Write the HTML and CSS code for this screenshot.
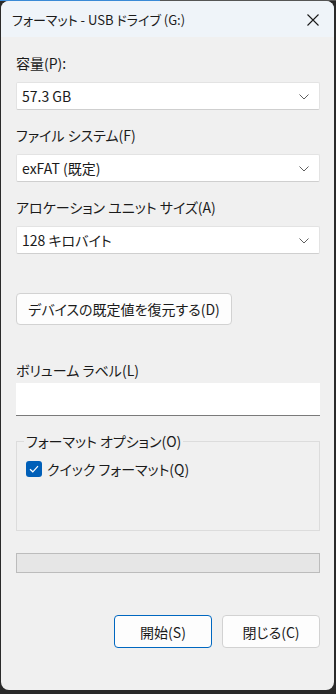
FILE: index.html
```html
<!DOCTYPE html>
<html lang="ja">
<head>
<meta charset="UTF-8">
<meta name="viewport" content="width=device-width, initial-scale=1.0">
<title>フォーマット - USB ドライブ (G:)</title>
<link rel="stylesheet" href="styles.css">
</head>
<body>

<div class="window">
  <div class="titlebar">
    <span class="title">フォーマット - USB ドライブ (G:)</span>
    <svg class="close" width="12" height="12" viewBox="0 0 12 12">
      <path d="M0.5 0.5L11.5 11.5M11.5 0.5L0.5 11.5" stroke="#1a1a1a" stroke-width="1.1" fill="none"/>
    </svg>
  </div>

  <div class="content">
    <div class="label">容量(P):</div>
    <div class="select">
      <span>57.3 GB</span>
      <svg class="chev" width="10" height="6" viewBox="0 0 10 6"><path d="M0.5 0.5L5 5L9.5 0.5" stroke="#5f5f5f" fill="none"/></svg>
    </div>

    <div class="label">ファイル システム(F)</div>
    <div class="select">
      <span>exFAT (既定)</span>
      <svg class="chev" width="10" height="6" viewBox="0 0 10 6"><path d="M0.5 0.5L5 5L9.5 0.5" stroke="#5f5f5f" fill="none"/></svg>
    </div>

    <div class="label">アロケーション ユニット サイズ(A)</div>
    <div class="select">
      <span>128 キロバイト</span>
      <svg class="chev" width="10" height="6" viewBox="0 0 10 6"><path d="M0.5 0.5L5 5L9.5 0.5" stroke="#5f5f5f" fill="none"/></svg>
    </div>

    <button class="btn restore">デバイスの既定値を復元する(D)</button>

    <div class="label label-tight">ボリューム ラベル(L)</div>
    <div class="textbox"></div>

    <fieldset class="group">
      <legend>フォーマット オプション(O)</legend>
      <div class="check">
        <span class="box">
          <svg width="10" height="8" viewBox="0 0 10 8"><path d="M1 4.2L3.8 6.8L9 1.2" stroke="#fff" stroke-width="1.2" fill="none"/></svg>
        </span>
        <span>クイック フォーマット(Q)</span>
      </div>
    </fieldset>

    <div class="progress"></div>

    <div class="actions">
      <button class="btn primary">開始(S)</button>
      <button class="btn">閉じる(C)</button>
    </div>
  </div>
</div>

</body>
</html>
```

FILE: styles.css
```css
body {
  margin: 0;
  padding: 1px 0 0;
  background: linear-gradient(to right, #3a8ad6 160px, #555 160px) top left / 100% 1px no-repeat, #2a2a2a;
  font-family: "Noto Sans CJK JP", "Noto Sans", sans-serif;
  font-feature-settings: "palt";
  color: #1b1b1b;
}
.window {
  margin: 0 2px 0 1px;
  height: 689px;
  background-color: #f0f0f0;
  border-radius: 8px;
  overflow: hidden;
}
.titlebar {
  height: 36px;
  background-color: #eff4f9;
  display: flex;
  align-items: center;
  justify-content: space-between;
  padding: 0 15px 0 11px;
}
.title {
  font-size: 13px;
}
.close {
  margin-top: 2px;
}
.content {
  padding: 16px 14px 0 15px;
}
.label {
  font-size: 14px;
  line-height: 20px;
  margin-bottom: 9px;
}
.label-tight {
  margin-bottom: 3px;
}
.select {
  height: 28px;
  background-color: #fff;
  border: 1px solid #e3e3e3;
  border-bottom-color: #cfcfcf;
  border-radius: 2px;
  display: flex;
  align-items: center;
  justify-content: space-between;
  padding: 0 10px 0 5px;
  font-size: 14px;
  box-sizing: border-box;
  margin-bottom: 15px;
}
.chev {
  margin-top: 2px;
}
.btn {
  font-family: inherit;
  font-feature-settings: "palt";
  font-size: 14px;
  color: #1b1b1b;
  background-color: #fdfdfd;
  border: 1px solid #d2d2d2;
  border-radius: 4px;
  height: 33px;
  padding: 0;
}
.restore {
  display: block;
  width: 216px;
  height: 32px;
  margin-top: 39px;
  margin-bottom: 35px;
}
.textbox {
  height: 33px;
  background-color: #fff;
  border-bottom: 1px solid #7a7a7a;
  box-sizing: border-box;
  margin-bottom: 15px;
}
.group {
  margin: 0;
  padding: 8px 9px 0;
  height: 100px;
  border: 1px solid #dcdcdc;
  box-sizing: border-box;
}
.group legend {
  font-size: 14px;
  padding: 0 2px;
  margin-left: -2px;
}
.check {
  display: flex;
  align-items: center;
  gap: 5px;
  font-size: 14px;
}
.box {
  width: 16px;
  height: 16px;
  background-color: #005fb8;
  border-radius: 3px;
  display: flex;
  align-items: center;
  justify-content: center;
}
.progress {
  margin-top: 22px;
  height: 20px;
  background-color: #e6e6e6;
  border: 1px solid #bcbcbc;
  box-sizing: border-box;
}
.actions {
  margin-top: 42px;
  display: flex;
  justify-content: flex-end;
  gap: 10px;
}
.actions .btn {
  width: 98px;
}
.primary {
  border-color: #0067c0;
}
```
